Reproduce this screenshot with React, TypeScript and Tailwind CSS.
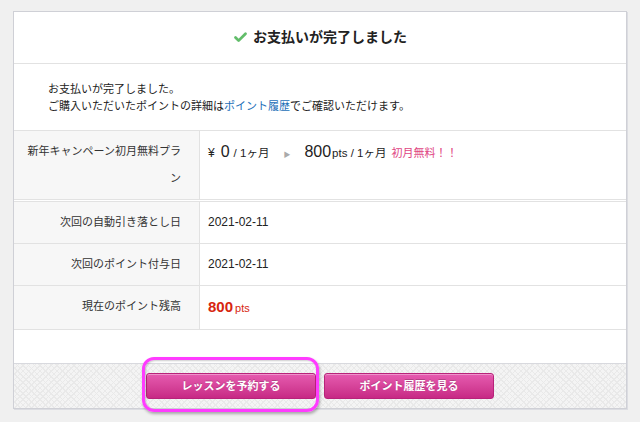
import { Check } from "lucide-react";

const font = "font-['Liberation_Sans','Noto_Sans_CJK_JP',sans-serif]";

type RowProps = {
  label: React.ReactNode;
  children: React.ReactNode;
  last?: boolean;
};

function Row({ label, children, last }: RowProps) {
  return (
    <div className={`flex ${last ? "" : "border-b border-[#e2e2e2]"}`}>
      <div className="w-[186px] shrink-0 bg-[#f7f7f7] border-r border-[#e2e2e2] py-[7px] pl-[10px] pr-[18px] text-right text-[11px] leading-[27px] text-[#333]">
        {label}
      </div>
      <div className="flex-1 py-[7px] pl-2 text-[11px] leading-[27px] text-[#222]">{children}</div>
    </div>
  );
}

function PinkButton({ children }: { children: React.ReactNode }) {
  return (
    <button className="h-[26px] w-[170px] rounded-[3px] border border-[#b8237a] bg-gradient-to-b from-[#e65bb0] to-[#c72985] text-[11px] font-bold text-white shadow-[inset_0_1px_0_rgba(255,255,255,0.35)] [text-shadow:0_-1px_0_rgba(0,0,0,0.2)]">
      {children}
    </button>
  );
}

export default function App() {
  return (
    <div className={`min-h-screen bg-[#f0f0f0] pt-[11px] pl-[13px] ${font}`}>
      <div className="w-[614px] border border-[#cfd0d6] bg-white shadow-[1px_1px_0_#dcdde2]">
        {/* header */}
        <div className="flex h-[52px] items-center justify-center gap-[5px] border-b border-[#e2e2e2]">
          <Check className="h-[15px] w-[15px] text-[#62bd6a]" strokeWidth={4.5} />
          <h1 className="text-[14px] font-bold text-[#222]">お支払いが完了しました</h1>
        </div>

        {/* message */}
        <div className="border-b border-[#e2e2e2] pt-[17px] pb-[15px] pl-[34px] text-[11px] leading-[17px] text-[#222]">
          <p>お支払いが完了しました。</p>
          <p>
            ご購入いただいたポイントの詳細は
            <a className="text-[#1d6fb8]">ポイント履歴</a>
            でご確認いただけます。
          </p>
        </div>

        {/* plan */}
        <div className="border-b border-[#e2e2e2]">
          <Row
            last
            label={
              <>
                新年キャンペーン初月無料プラ
                <br />ン
              </>
            }
          >
            <div className="flex items-baseline">
              <span className="text-[12px]">¥</span>
              <span className="ml-[6px] text-[16px]">0</span>
              <span className="ml-[4px] text-[11.5px]">/ 1ヶ月</span>
              <span className="ml-[14px] text-[7px] text-[#aaa]">▶</span>
              <span className="ml-[14px] text-[16px]">800</span>
              <span className="ml-[1px] text-[11.5px]">pts / 1ヶ月</span>
              <span className="ml-[5px] text-[#e0457f]">初月無料！！</span>
            </div>
          </Row>
        </div>

        {/* details */}
        <div className="mt-[1px] border-t border-b border-[#e2e2e2]">
          <Row label="次回の自動引き落とし日">
            <span className="text-[12px]">2021-02-11</span>
          </Row>
          <Row label="次回のポイント付与日">
            <span className="text-[12px]">2021-02-11</span>
          </Row>
          <Row label="現在のポイント残高" last>
            <span className="text-[15px] font-bold text-[#d7260f]">800</span>
            <span className="ml-[2px] text-[11px] text-[#d7260f]">pts</span>
          </Row>
        </div>

        <div className="h-[33px]" />

        {/* footer */}
        <div className="flex h-[45px] items-center justify-center gap-2 border-t border-[#d8d9de] bg-[#f4f4f4] bg-[repeating-linear-gradient(45deg,#e9e9e9_0_1px,transparent_1px_4px),repeating-linear-gradient(-45deg,#e9e9e9_0_1px,transparent_1px_4px)]">
          <div className="relative">
            <PinkButton>レッスンを予約する</PinkButton>
            <span className="pointer-events-none absolute -top-[16px] -bottom-[13px] -left-[4px] -right-[3px] rounded-[12px] border-[3px] border-[#ff3cff] shadow-[1px_2px_3px_rgba(0,0,0,0.3),inset_1px_1px_2px_rgba(0,0,0,0.2)]" />
          </div>
          <PinkButton>ポイント履歴を見る</PinkButton>
        </div>
      </div>
    </div>
  );
}
